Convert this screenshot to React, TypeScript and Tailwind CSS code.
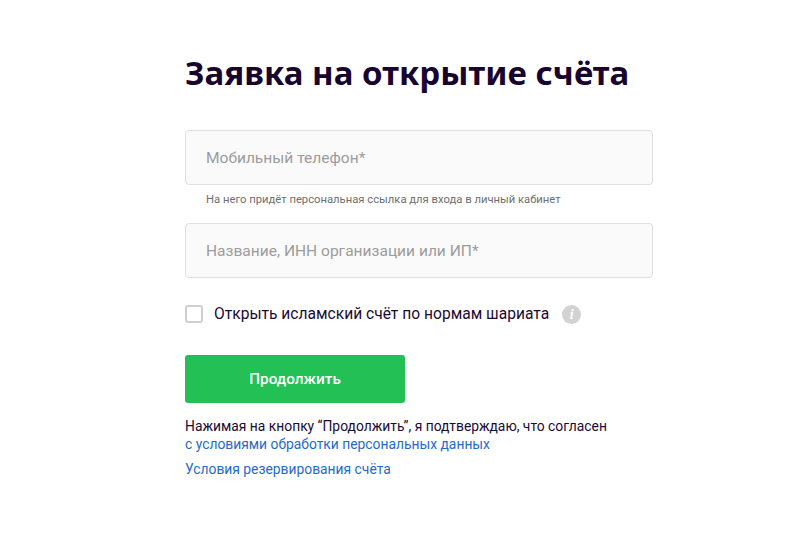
export default function App() {
  return (
    <div className="min-h-[536px] bg-white font-['Roboto',sans-serif] text-[#1b0a33]">
      <div className="ml-[185px] w-[468px] pt-[51px]">
        <h1 className="font-['Noto_Sans',sans-serif] text-[33px] leading-[44px] font-bold tracking-[0.04px] whitespace-nowrap text-[#170530]">
          Заявка на открытие счёта
        </h1>

        <div className="mt-[35px] flex h-[55px] items-center rounded-[4px] border border-[#dfdfdf] bg-[#fafafa] px-5 pt-[2px] text-[15.55px] text-[#9c9c9c]">
          Мобильный телефон*
        </div>
        <p className="mt-[8px] pl-[21px] text-[11.25px] leading-[14px] text-[#6f6f6f]">
          На него придёт персональная ссылка для входа в личный кабинет
        </p>

        <div className="mt-[16px] flex h-[55px] items-center rounded-[4px] border border-[#dfdfdf] bg-[#fafafa] px-5 pt-[2px] text-[15.55px] text-[#9c9c9c]">
          Название, ИНН организации или ИП*
        </div>

        <div className="mt-[27px] flex h-[18px] items-center">
          <span className="h-[18px] w-[18px] rounded-[3px] border-2 border-[#cfcfcf] bg-white" />
          <span className="ml-[11px] text-[15.6px] leading-[18px]">Открыть исламский счёт по нормам шариата</span>
          <span className="ml-[13px] flex h-[19px] w-[19px] items-center justify-center rounded-full bg-[#d2d2d2] font-['Liberation_Serif',serif] text-[14px] font-bold text-white italic">
            i
          </span>
        </div>

        <button className="mt-[32px] flex h-[48px] w-[220px] items-center justify-center rounded-[3px] bg-[#22c055] pt-px text-[15.3px] font-medium text-white">
          Продолжить
        </button>

        <p className="mt-[14px] text-[13.85px] leading-[18px] whitespace-nowrap">
          Нажимая на кнопку “Продолжить”, я подтверждаю, что согласен
          <br />
          <a className="text-[#1f6bcb]">с условиями обработки персональных данных</a>
        </p>
        <a className="mt-[7px] block text-[13.85px] leading-[18px] text-[#1f6bcb]">Условия резервирования счёта</a>
      </div>
    </div>
  );
}
